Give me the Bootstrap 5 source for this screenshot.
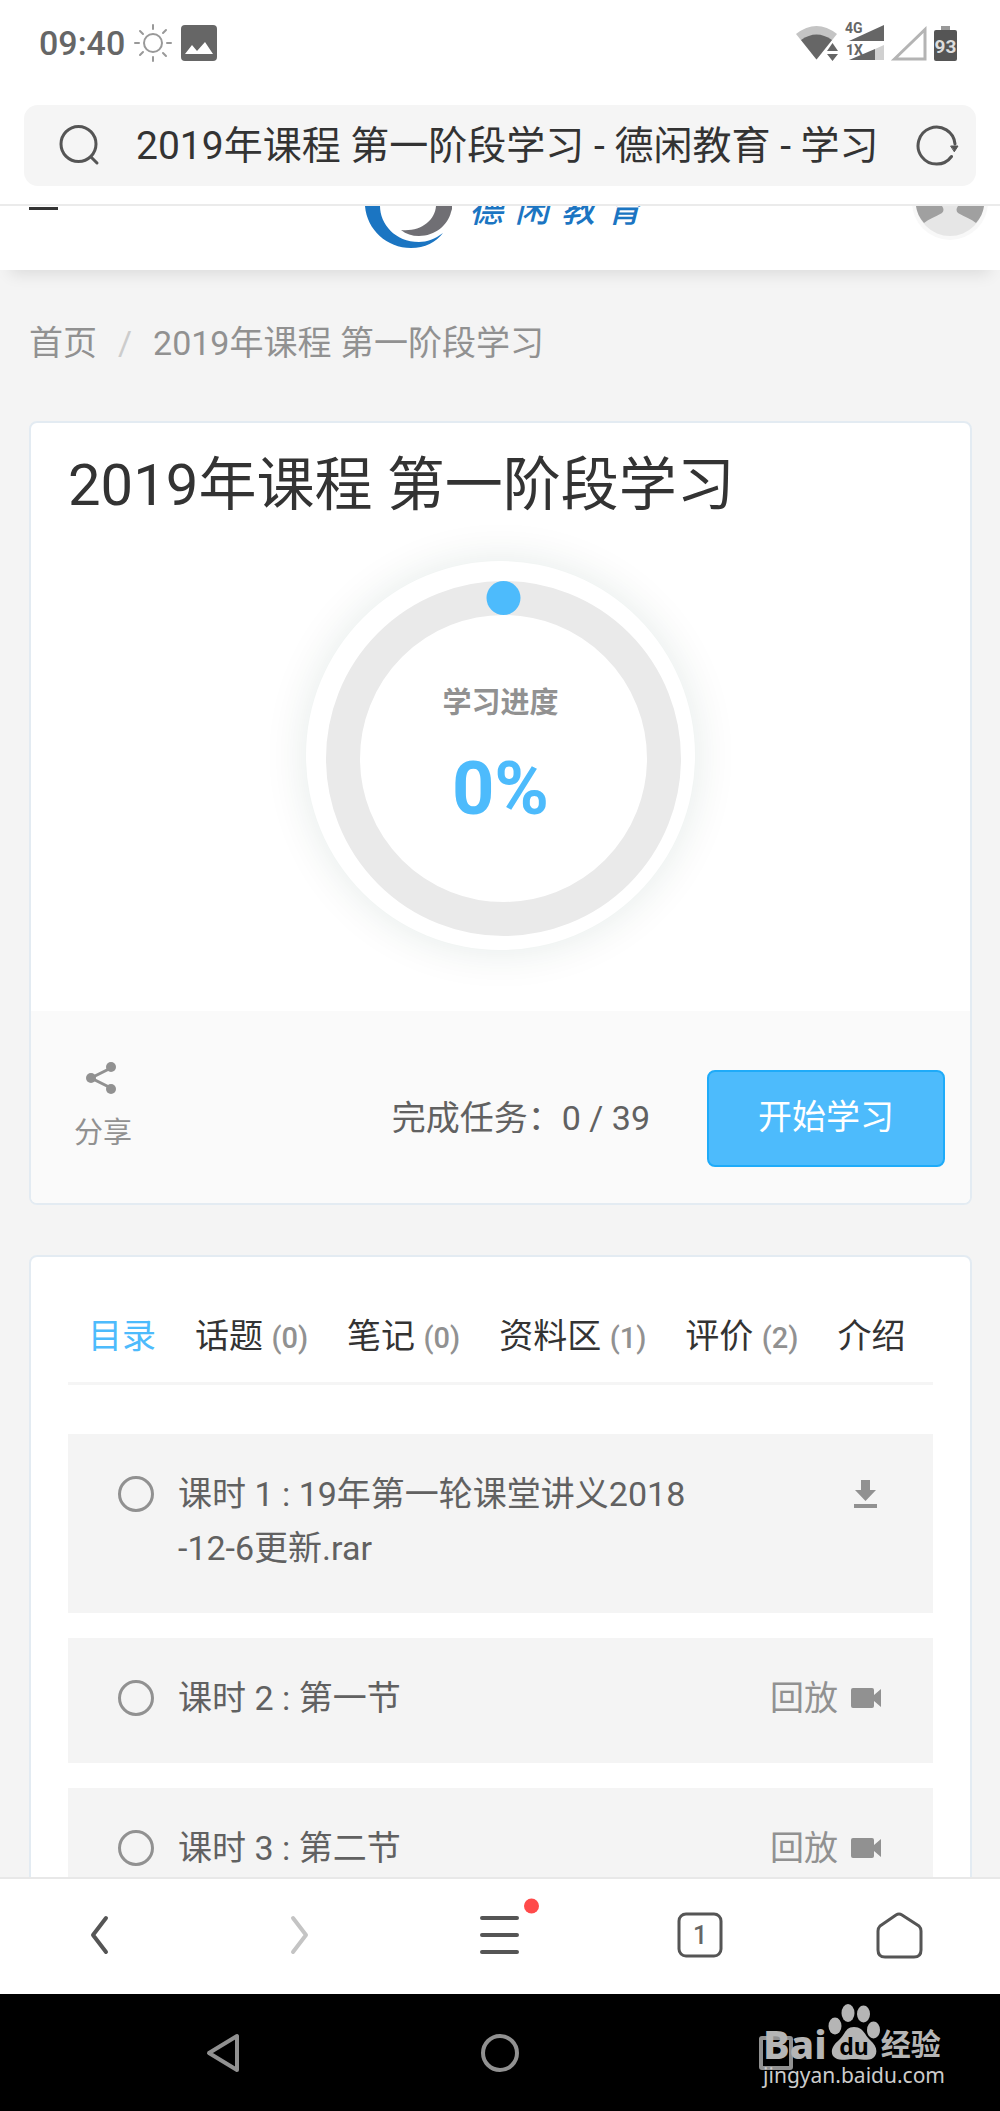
<!DOCTYPE html>
<html lang="zh-CN">
<head>
<meta charset="utf-8">
<meta name="viewport" content="width=device-width, initial-scale=1">
<title>2019年课程 第一阶段学习 - 德闲教育</title>
<link href="https://cdn.jsdelivr.net/npm/bootstrap@5.3.0/dist/css/bootstrap.min.css" rel="stylesheet">
<style>
  body { font-family: Roboto, "Noto Sans CJK SC", sans-serif; font-size: 34px; line-height: 54px; color: #616161; background: #f4f4f4; }
  svg { display: block; flex: none; }
  a { color: inherit; text-decoration: none; }

  .status-bar { height: 86px; padding: 0 42px 0 39px; color: #666; }
  .clock { font-weight: 500; }
  .address-wrap { padding: 19px 24px 18px; border-bottom: 2px solid #ebebeb; z-index: 2; }
  .address { height: 81px; padding: 0 16px 0 34px; border-radius: 14px; background: #f5f5f5; color: #555; }
  .address input { font-size: 39px; line-height: 54px; color: #333; padding: 0; margin: 0 24px 0 35px; min-width: 0; outline: 0; }

  .site-header { padding: 0 12px 30px 18px; box-shadow: 0 14px 16px -10px rgba(0,0,0,.1); z-index: 1; height: 64px; }
  .brand-name { gap: 12px; height: 21px; color: #1b75c2; font-weight: 500; font-style: italic; line-height: 34px; }
  .burger { padding: 1px 11px; display: block; }

  .page-area { min-height: 0; padding: 46px 28px 0 29px; }
  .breadcrumb { --bs-breadcrumb-margin-bottom: 51px; --bs-breadcrumb-item-padding-x: 21px; --bs-breadcrumb-divider-color: #ccc; --bs-breadcrumb-item-active-color: #919191; color: #919191; }
  .card { --bs-card-border-width: 2px; --bs-card-border-color: #e3ebf2; --bs-card-border-radius: 8px; --bs-card-inner-border-radius: 6px; --bs-card-spacer-x: 37px; --bs-card-spacer-y: 25px; --bs-card-cap-bg: #fafafa; --bs-card-color: #616161; flex: none; }
  .course-title { font-size: 58px; line-height: 74px; color: #333; margin-bottom: 39px; }
  .progress-dial { width: 389px; height: 389px; padding: 20px 14px 14px 20px; border-radius: 50%; box-shadow: 0 0 44px rgba(20,60,50,.11); margin-bottom: 36px; position: relative; }
  .dial-text { position: absolute; inset: 0; padding-top: 117px; }
  .small-text { font-size: 29px; line-height: 50px; color: #919191; }
  .percent { font-size: 74px; line-height: 84px; font-weight: 700; color: #4dbbfc; margin-top: 19px; }
  .card-footer { padding: 49px 25px 27px 43px; border: 0; gap: 57px; }
  .share { margin-bottom: 18px; }
  .share .small-text { margin-top: 12px; }
  .btn-start { --bs-btn-font-size: 34px; --bs-btn-line-height: 54px; --bs-btn-border-width: 2px; --bs-btn-border-radius: 8px; --bs-btn-color: #fff; --bs-btn-bg: #4dbbfc; --bs-btn-border-color: #1eabf9; --bs-btn-hover-color: #fff; --bs-btn-hover-bg: #1eabf9; padding: 18px 49px 21px; }
  .catalog { margin-top: 50px; }
  .catalog .card-body { padding-top: 52px; }
  .tabs { border-bottom: 3px solid #f5f5f5; gap: 39px; padding: 0 20px 17px; margin-bottom: 49px; }
  .tabs .nav-link { padding: 0; color: #333; white-space: nowrap; }
  .tabs .nav-link.active { color: #4dbbfc; }
  .count { font-size: 29px; font-weight: 500; color: #919191; }
  .lessons { gap: 25px; }
  .lesson { background: #f4f4f4; padding: 33px 52px 38px 50px; color: #616161; }
  .lesson-name { flex: 0 1 512px; word-break: break-all; margin-left: 24px; }
  .lesson-kind { margin-left: auto; gap: 13px; height: 54px; color: #919191; }
  .ring { width: 36px; height: 36px; margin-top: 9px; border: 3px solid #919191; border-radius: 50%; flex: none; }

  .toolbar { border-top: 2px solid #e8e8e8; height: 117px; padding-bottom: 3px; z-index: 1; }
  .toolbar .btn { --bs-btn-border-width: 0; }
  .sys-nav { height: 117px; background: #000; gap: 237px; color: #919191; }
  .watermark { position: absolute; right: 55px; top: 8px; color: #b5b5b5; font-family: "Noto Sans", "Noto Sans CJK SC", sans-serif; }
  .wm-word { font-size: 40px; line-height: 36px; font-weight: 800; }
  .wm-cn { font-size: 30px; line-height: 36px; font-weight: 700; }
  .wm-url { font-size: 21px; line-height: 26px; color: #ccc; }
</style>
</head>
<body class="vh-100 d-flex flex-column overflow-hidden">

<div class="status-bar bg-white d-flex align-items-center flex-shrink-0">
  <span class="clock">09:40</span>
  <svg class="ms-2" width="40" height="40" viewBox="0 0 40 40" fill="none" stroke="#999" stroke-width="2" stroke-linecap="round"><circle cx="20" cy="20" r="9"/><path d="M20 2v4M20 34v4M2 20h4M34 20h4M7 8l3 3M30 30l3 3M7 32l3-3M30 10l3-3"/></svg>
  <svg class="ms-2" width="36" height="36" viewBox="0 0 36 36"><rect width="36" height="36" rx="4" fill="#666"/><path d="M4 29l7-9 5 6 8-9 8 12z" fill="#fff"/></svg>
  <svg class="ms-auto overflow-visible" width="162" height="40" viewBox="0 0 162 40" font-family="Roboto" font-weight="700">
    <path d="M0 11Q20.500-5 41 11L20.500 36.500Z" fill="#c4c4c4"/><path d="M5 17Q20.500 6 36 17L20.500 36.500Z" fill="#666"/>
    <path d="M29 30l7.500-13 8 13-8 11z" fill="#fff"/><path d="M31 28h11l-5.500-8zM31 31h11l-5.500 7z" fill="#666"/>
    <path d="M53 18L88 2v16z" fill="#666"/><path d="M79 26l9-4v15h-9z" fill="#d0d0d0"/><path d="M53 37l26-11v11z" fill="#666"/>
    <text x="49" y="10" font-size="14" fill="#666">4G</text><text x="50" y="32" font-size="14" fill="#666">1X</text>
    <path d="M98.500 36L129 6.500V36z" fill="none" stroke="#b4b4b4" stroke-width="3"/>
    <path d="M145 3h9v4h-9z" fill="#999"/><rect x="138" y="7" width="23" height="31" rx="2" fill="#555"/>
    <text x="149.500" y="30" font-size="19" text-anchor="middle" fill="#ddd">93</text>
  </svg>
</div>

<div class="address-wrap bg-white flex-shrink-0 position-relative">
  <label class="address d-flex align-items-center">
    <svg width="43" height="43" viewBox="0 0 43 43" fill="none" stroke="#555" stroke-width="3" stroke-linecap="round"><circle cx="20.500" cy="20" r="17.500"/><path d="M33 33l6 6"/></svg>
    <input class="border-0 bg-transparent flex-grow-1" type="text" aria-label="网址" value="2019年课程 第一阶段学习 - 德闲教育 - 学习">
    <button class="btn p-0 border-0" type="button" aria-label="刷新"><svg width="46" height="43" viewBox="0 0 46 43" fill="none" stroke="#555" stroke-width="3" stroke-linecap="round"><path d="M41 20A18.500 18.500 0 1 0 37.500 32.500"/><path d="M37 22h7l-3.500 5.500z" fill="#555" stroke-width="1"/></svg></button>
  </label>
</div>

<header class="site-header bg-white d-flex position-relative flex-shrink-0">
  <div class="col"><button class="burger btn border-0" type="button" aria-label="菜单"><svg width="29" height="3"><path d="M0 0h29v3H0z" fill="#333"/></svg></button></div>
  <a class="d-flex" href="#" aria-label="德闲教育">
    <svg width="88" height="44" viewBox="0 0 88 44"><path d="M0 0C2 24 22 42 46 42C60 42 71 36 78 27C70 33 62 36 54 36C30 36 15 18 15 0Z" fill="#1b75c2"/><path d="M71 0H87Q87.500 3 86 6C83 19 70 30 54 30C47 30 41 28 36 24C55 26 70 15 71 0Z" fill="#706f74"/></svg>
    <span class="brand-name d-flex align-items-end ms-3 overflow-hidden"><span>德</span><span>闲</span><span>教</span><span>育</span></span>
  </a>
  <div class="col d-flex justify-content-end">
    <svg width="76" height="36" viewBox="0 0 76 36"><circle cx="38" cy="-4" r="38" fill="#f8f8f8"/><circle cx="38" cy="-4" r="34" fill="#e6e6e6"/><path d="M4 0H30Q33 4 30 7C23 11 17 13 12 17Q5 9 4 0ZM72 0H46Q43 4 46 7C53 11 59 13 64 17Q71 9 72 0Z" fill="#a0a0a0"/></svg>
  </div>
</header>

<main class="page-area flex-grow-1 d-flex flex-column overflow-hidden">
  <nav aria-label="breadcrumb">
    <ol class="breadcrumb">
      <li class="breadcrumb-item"><a href="#">首页</a></li>
      <li class="breadcrumb-item active" aria-current="page">2019年课程 第一阶段学习</li>
    </ol>
  </nav>

  <section class="card">
    <div class="card-body">
      <h1 class="course-title fw-normal">2019年课程 第一阶段学习</h1>
      <div class="progress-dial bg-white mx-auto">
        <svg width="355" height="355" viewBox="0 0 355 355"><circle cx="177.500" cy="177.500" r="160.500" fill="none" stroke="#eaeaea" stroke-width="34"/><circle cx="177.500" cy="17" r="17" fill="#4dbbfc"/></svg>
        <div class="dial-text text-center">
          <div class="small-text fw-bold">学习进度</div>
          <div class="percent">0%</div>
        </div>
      </div>
    </div>
    <div class="card-footer d-flex align-items-center">
      <a class="share me-auto text-center" href="#">
        <svg class="mx-auto" width="36" height="36" viewBox="0 0 36 36" fill="#919191"><path d="M26 8L6 18l20 10" fill="none" stroke="#919191" stroke-width="3"/><circle cx="26" cy="7" r="5"/><circle cx="6" cy="18" r="5"/><circle cx="26" cy="29" r="5"/></svg>
        <span class="small-text d-block">分享</span>
      </a>
      <span>完成任务：0 / 39</span>
      <button class="btn btn-start" type="button">开始学习</button>
    </div>
  </section>

  <section class="card catalog">
    <div class="card-body">
      <ul class="tabs nav flex-nowrap">
        <li><a class="nav-link active" href="#">目录</a></li>
        <li><a class="nav-link" href="#">话题 <span class="count">(0)</span></a></li>
        <li><a class="nav-link" href="#">笔记 <span class="count">(0)</span></a></li>
        <li><a class="nav-link" href="#">资料区 <span class="count">(1)</span></a></li>
        <li><a class="nav-link" href="#">评价 <span class="count">(2)</span></a></li>
        <li><a class="nav-link" href="#">介绍</a></li>
      </ul>
      <div class="lessons d-flex flex-column">
        <a class="lesson d-flex" href="#">
          <span class="ring"></span><span class="lesson-name">课时 1 : 19年第一轮课堂讲义2018-12-6更新.rar</span>
          <span class="lesson-kind d-flex align-items-center"><svg width="30" height="30" viewBox="0 0 30 30" fill="currentColor"><path d="M10 1h9v10h6L14.500 22 4 11h6zM3 25h23v4H3z"/></svg></span>
        </a>
        <a class="lesson d-flex" href="#">
          <span class="ring"></span><span class="lesson-name">课时 2 : 第一节</span>
          <span class="lesson-kind d-flex align-items-center">回放 <svg width="30" height="20" viewBox="0 0 30 20" fill="currentColor"><path d="M2 0h19q2 0 2 2v5l7-6v18l-7-6v5q0 2-2 2H2q-2 0-2-2V2q0-2 2-2z"/></svg></span>
        </a>
        <a class="lesson d-flex" href="#">
          <span class="ring"></span><span class="lesson-name">课时 3 : 第二节</span>
          <span class="lesson-kind d-flex align-items-center">回放 <svg width="30" height="20" viewBox="0 0 30 20" fill="currentColor"><path d="M2 0h19q2 0 2 2v5l7-6v18l-7-6v5q0 2-2 2H2q-2 0-2-2V2q0-2 2-2z"/></svg></span>
        </a>
      </div>
    </div>
  </section>
</main>

<nav class="toolbar bg-white d-flex align-items-center flex-shrink-0" aria-label="浏览器">
  <button class="btn col p-0" type="button" aria-label="后退"><svg class="mx-auto" width="50" height="50" viewBox="0 0 50 50" fill="none" stroke="#555" stroke-width="4" stroke-linecap="round" stroke-linejoin="round"><path d="M31 8L18 25l13 17"/></svg></button>
  <button class="btn col p-0" type="button" aria-label="前进"><svg class="mx-auto" width="50" height="50" viewBox="0 0 50 50" fill="none" stroke="#c4c4c4" stroke-width="4" stroke-linecap="round" stroke-linejoin="round"><path d="M18 8l13 17-13 17"/></svg></button>
  <button class="btn col p-0" type="button" aria-label="菜单"><svg class="mx-auto" width="80" height="80" viewBox="0 0 80 80" fill="none" stroke="#555" stroke-width="4" stroke-linecap="round"><path d="M22 23h35M22 40h35M22 57h35"/><circle cx="71.500" cy="11" r="7.500" fill="#ff4a4a" stroke="none"/></svg></button>
  <button class="btn col p-0" type="button" aria-label="标签页"><svg class="mx-auto" width="50" height="50" viewBox="0 0 50 50"><rect x="4" y="4" width="42" height="42" rx="7" fill="none" stroke="#555" stroke-width="3"/><text x="25" y="34" font-family="Roboto" font-weight="500" font-size="25" text-anchor="middle" fill="#666">1</text></svg></button>
  <button class="btn col p-0" type="button" aria-label="主页"><svg class="mx-auto" width="50" height="50" viewBox="0 0 50 50" fill="none" stroke="#555" stroke-width="3" stroke-linejoin="round"><path d="M21 5q3-2 6 0L44 16q2 2 2 5v19q0 7-7 7H10q-7 0-7-7V21q0-3 2-5z"/></svg></button>
</nav>

<nav class="sys-nav d-flex align-items-center justify-content-center flex-shrink-0 position-relative" aria-label="系统导航">
  <svg width="40" height="40" viewBox="0 0 40 40" fill="none" stroke="currentColor" stroke-width="4" stroke-linejoin="round"><path d="M34 3v34L6 20z"/></svg>
  <svg width="40" height="40" viewBox="0 0 40 40" fill="none" stroke="currentColor" stroke-width="4"><circle cx="20" cy="20" r="17"/></svg>
  <svg width="40" height="40" viewBox="0 0 40 40" fill="none" stroke="currentColor" stroke-width="4"><rect x="4" y="5" width="30" height="30" rx="1"/></svg>
  <div class="watermark">
    <div class="d-flex align-items-end">
      <span class="wm-word">Bai</span>
      <svg width="54" height="60" viewBox="0 0 54 60" fill="currentColor"><ellipse cx="8" cy="24" rx="6.500" ry="8.500"/><ellipse cx="21" cy="11" rx="6.500" ry="9"/><ellipse cx="36.500" cy="12" rx="6.500" ry="8.500"/><ellipse cx="46.500" cy="28" rx="6.500" ry="8.500"/><path d="M27 25C36 25 37 32 43 38C49 43 51 49 48 54C44 60 37 57 27 57C18 57 11 60 6 54C3 49 6 43 12 38C18 33 18 25 27 25Z"/><text x="27" y="53" text-anchor="middle" font-size="23" font-weight="700" fill="#000">du</text></svg>
      <span class="wm-cn">经验</span>
    </div>
    <div class="wm-url">jingyan.baidu.com</div>
  </div>
</nav>
<script src="https://cdn.jsdelivr.net/npm/bootstrap@5.3.0/dist/js/bootstrap.bundle.min.js"></script>
</body>
</html>
